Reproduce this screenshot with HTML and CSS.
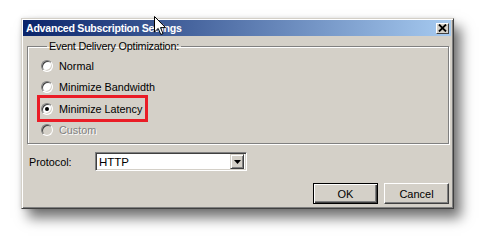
FILE: index.html
```html
<!DOCTYPE html>
<html>
<head>
<meta charset="utf-8">
<link rel="stylesheet" href="styles.css">
</head>
<body>
<div class="stage">
  <div class="window">
    <div class="titlebar">
      <span class="title">Advanced Subscription Settings</span>
      <span class="close">
        <svg width="9" height="8" viewBox="0 0 9 8"><path d="M1 0.5 L8 7.5 M8 0.5 L1 7.5" stroke="#000" stroke-width="1.8"/></svg>
      </span>
    </div>
    <div class="body">
      <fieldset class="group">
        <legend>Event Delivery Optimization:</legend>
        <div class="row"><span class="radio"></span><span>Normal</span></div>
        <div class="row"><span class="radio"></span><span>Minimize Bandwidth</span></div>
        <div class="row highlight"><span class="radio checked"></span><span>Minimize Latency</span></div>
        <div class="row disabled"><span class="radio"></span><span>Custom</span></div>
      </fieldset>
      <div class="protocol">
        <span class="plabel">Protocol:</span>
        <div class="combo">
          <span class="cval">HTTP</span>
          <span class="cbtn"><svg width="7" height="4" viewBox="0 0 7 4"><path d="M0 0 H7 L3.5 4 Z" fill="#000"/></svg></span>
        </div>
      </div>
      <div class="buttons">
        <button class="btn default">OK</button>
        <button class="btn">Cancel</button>
      </div>
    </div>
  </div>
  <svg class="cursor" width="13" height="20" viewBox="0 0 13 20"><path d="M0.5 0.5 L0.5 16 L4.2 12.4 L6.8 18.5 L9 17.6 L6.5 11.6 L11.5 11.6 Z" fill="#fff" stroke="#000" stroke-width="1"/></svg>
</div>
</body>
</html>
```
FILE: styles.css
```css
html, body {
  margin: 0;
  padding: 0;
  background: #fff;
}
body {
  font-family: "Liberation Sans", Arial, sans-serif;
  font-size: 10.8px;
  color: #000;
}
.stage {
  position: relative;
  width: 496px;
  height: 251px;
  padding: 18px 0 0 21px;
  box-sizing: border-box;
}
.window {
  width: 433px;
  height: 191px;
  box-sizing: border-box;
  background: #d4d0c8;
  border: 1px solid;
  border-color: #d4d0c8 #404040 #404040 #d4d0c8;
  padding: 1px 2px 2px 1px;
  display: flex;
  flex-direction: column;
  box-shadow: inset 1px 1px 0 #fff, inset -1px -1px 0 #808080,
    7px 9px 12px rgba(0,0,0,0.55), 0 0 4px rgba(0,0,0,0.12);
}
.titlebar {
  height: 16px;
  display: flex;
  align-items: center;
  justify-content: space-between;
  padding: 0 2px 0 3px;
  background: linear-gradient(to right, #0a246a, #a6caf0);
}
.title {
  color: #fff;
  font-weight: bold;
  font-size: 10.6px;
  letter-spacing: -0.25px;
}
.close {
  width: 13px;
  height: 11px;
  box-sizing: border-box;
  background: #d4d0c8;
  border: 1px solid;
  border-color: #fff #404040 #404040 #fff;
  display: flex;
  align-items: center;
  justify-content: center;
}
.body {
  flex: 1;
  padding: 4px 2px 0 4px;
  display: flex;
  flex-direction: column;
}
.group {
  margin: 0;
  padding: 2px 0 0 13px;
  height: 104px;
  box-sizing: border-box;
  border: 1px solid #808080;
  box-shadow: inset 1px 1px 0 #fff, 1px 1px 0 #fff;
  min-width: 0;
}
.group legend {
  padding: 0 2px;
  margin-left: 6px;
  line-height: 13px;
  letter-spacing: -0.2px;
}
.row {
  height: 21.5px;
  display: flex;
  align-items: center;
  gap: 6px;
}
.highlight {
  position: relative;
  width: fit-content;
}
.highlight::after {
  content: "";
  position: absolute;
  left: -4px;
  top: -3px;
  right: -6px;
  bottom: -2px;
  border: 3px solid #ea1c26;
}
.radio {
  width: 12px;
  height: 12px;
  box-sizing: border-box;
  border-radius: 50%;
  background: #fff;
  border: 1px solid;
  border-color: #808080 #fff #fff #808080;
  box-shadow: inset 1px 1px 0 #404040, inset -1px -1px 0 #d4d0c8;
  position: relative;
  flex: none;
}
.radio.checked::after {
  content: "";
  position: absolute;
  left: 3px;
  top: 3px;
  width: 4px;
  height: 4px;
  border-radius: 50%;
  background: #000;
}
.disabled {
  color: #808080;
  text-shadow: 1px 1px 0 #fff;
}
.disabled .radio {
  background: #d4d0c8;
}
.protocol {
  display: flex;
  align-items: center;
  margin-top: 8px;
  padding-left: 2px;
}
.plabel {
  width: 66px;
}
.combo {
  width: 152px;
  height: 19px;
  box-sizing: border-box;
  background: #fff;
  border: 1px solid;
  border-color: #808080 #fff #fff #808080;
  box-shadow: inset 1px 1px 0 #404040, inset -1px -1px 0 #d4d0c8;
  display: flex;
  align-items: center;
  justify-content: space-between;
  padding: 2px;
}
.cval {
  padding-left: 1px;
  font-size: 11.5px;
}
.cbtn {
  width: 14px;
  height: 15px;
  box-sizing: border-box;
  background: #d4d0c8;
  border: 1px solid;
  border-color: #d4d0c8 #404040 #404040 #d4d0c8;
  box-shadow: inset 1px 1px 0 #fff, inset -1px -1px 0 #808080;
  display: flex;
  align-items: center;
  justify-content: center;
}
.buttons {
  display: flex;
  justify-content: flex-end;
  gap: 6px;
  margin-top: 12px;
  padding-right: 0;
}
.btn {
  width: 65px;
  height: 21px;
  box-sizing: border-box;
  font-family: "Liberation Sans", Arial, sans-serif;
  font-size: 11px;
  color: #000;
  background: #d4d0c8;
  border: 1px solid;
  border-color: #fff #404040 #404040 #fff;
  box-shadow: inset -1px -1px 0 #808080;
  padding: 0;
  margin: 0;
}
.btn.default {
  border: 1px solid #000;
  box-shadow: inset 1px 1px 0 #fff, inset -1px -1px 0 #404040, inset -2px -2px 0 #808080;
}
.cursor {
  position: absolute;
  left: 154px;
  top: 16px;
}
```
